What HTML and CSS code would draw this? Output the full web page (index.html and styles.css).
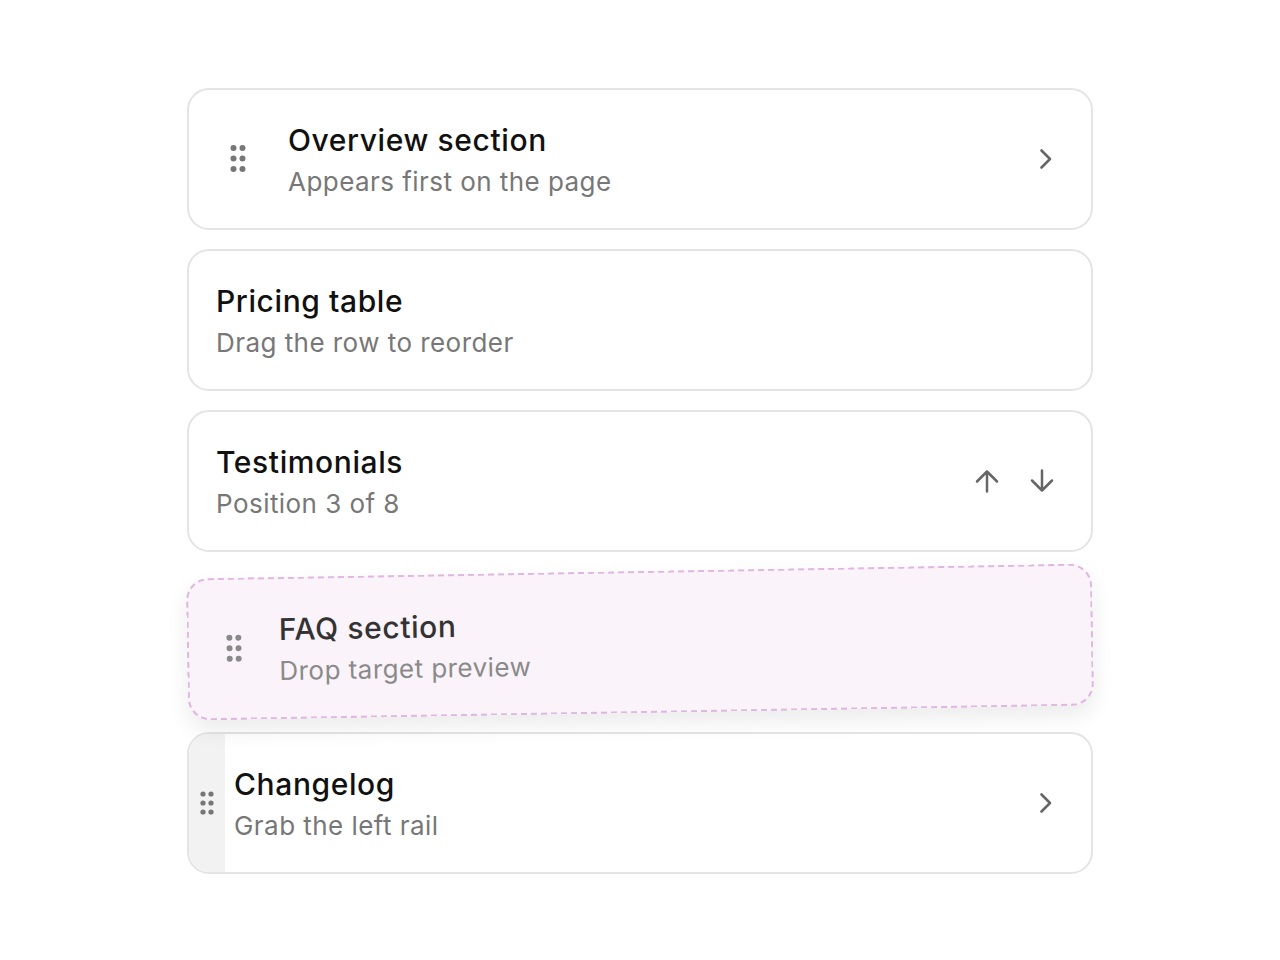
FILE: index.html
```html
<!DOCTYPE html>
<html lang="en">
<head>
<meta charset="utf-8">
<title>Reorder sections</title>
<link rel="stylesheet" href="styles.css">
</head>
<body>
<main class="list">
  <div class="card card-handle">
    <svg class="grip" width="16" height="28" viewBox="0 0 16 28"><circle cx="3.5" cy="3" r="3"/><circle cx="12.5" cy="3" r="3"/><circle cx="3.5" cy="13.5" r="3"/><circle cx="12.5" cy="13.5" r="3"/><circle cx="3.5" cy="24" r="3"/><circle cx="12.5" cy="24" r="3"/></svg>
    <div class="text">
      <div class="title">Overview section</div>
      <div class="sub">Appears first on the page</div>
    </div>
    <svg class="chev" width="14" height="22" viewBox="0 0 14 22"><path d="M2.5 2.5 L11 11 L2.5 19.5"/></svg>
  </div>

  <div class="card">
    <div class="text">
      <div class="title">Pricing table</div>
      <div class="sub">Drag the row to reorder</div>
    </div>
  </div>

  <div class="card">
    <div class="text">
      <div class="title">Testimonials</div>
      <div class="sub">Position 3 of 8</div>
    </div>
    <div class="arrows">
      <svg class="arrow" width="24" height="24" viewBox="0 0 24 24"><path d="M12 22.5V2.5 M2 12.5 L12 2.5 L22 12.5"/></svg>
      <svg class="arrow" width="24" height="24" viewBox="0 0 24 24"><path d="M12 1.5V21.5 M2 11.5 L12 21.5 L22 11.5"/></svg>
    </div>
  </div>

  <div class="card card-drag">
    <svg class="grip" width="16" height="28" viewBox="0 0 16 28"><circle cx="3.5" cy="3" r="3"/><circle cx="12.5" cy="3" r="3"/><circle cx="3.5" cy="13.5" r="3"/><circle cx="12.5" cy="13.5" r="3"/><circle cx="3.5" cy="24" r="3"/><circle cx="12.5" cy="24" r="3"/></svg>
    <div class="text">
      <div class="title">FAQ section</div>
      <div class="sub">Drop target preview</div>
    </div>
  </div>

  <div class="card card-rail">
    <div class="rail">
      <svg class="grip" width="14" height="24" viewBox="0 0 14 24"><circle cx="3" cy="3" r="2.6"/><circle cx="11" cy="3" r="2.6"/><circle cx="3" cy="12" r="2.6"/><circle cx="11" cy="12" r="2.6"/><circle cx="3" cy="21" r="2.6"/><circle cx="11" cy="21" r="2.6"/></svg>
    </div>
    <div class="text">
      <div class="title">Changelog</div>
      <div class="sub">Grab the left rail</div>
    </div>
    <svg class="chev" width="14" height="22" viewBox="0 0 14 22"><path d="M2.5 2.5 L11 11 L2.5 19.5"/></svg>
  </div>
</main>
</body>
</html>
```

FILE: styles.css
```css
* { box-sizing: border-box; }

body {
  margin: 0;
  background: #ffffff;
  font-family: Inter, "Noto Sans", "Liberation Sans", sans-serif;
}

.list {
  width: 906px;
  margin: 88px auto 0;
  display: flex;
  flex-direction: column;
  gap: 19px;
}

.card {
  height: 142px;
  border: 2px solid #e4e4e4;
  border-radius: 22px;
  background: #ffffff;
  display: flex;
  align-items: center;
  padding: 0 38px 0 27px;
  overflow: hidden;
}

.text {
  flex: 1;
  display: flex;
  flex-direction: column;
  gap: 4px;
  padding-top: 3px;
}

.title {
  font-size: 30px;
  font-weight: 500;
  line-height: 38px;
  letter-spacing: 0.6px;
  color: #111111;
}

.sub {
  font-size: 26px;
  font-weight: 400;
  line-height: 38px;
  letter-spacing: 0.45px;
  color: #777777;
}

.grip { fill: #777777; flex: none; }

.chev {
  flex: none;
  fill: none;
  stroke: #666666;
  stroke-width: 2.6;
  stroke-linecap: round;
  stroke-linejoin: round;
}

.card-handle { padding-left: 41px; }
.card-handle .grip { margin-right: 42px; }

.arrows {
  display: flex;
  gap: 31px;
  margin-right: -1px;
}

.arrow {
  fill: none;
  stroke: #666666;
  stroke-width: 2.5;
  stroke-linecap: round;
  stroke-linejoin: round;
}

.card-drag {
  background: #faf3fa;
  border: 2px dashed #dfb7df;
  transform: rotate(-0.95deg);
  box-shadow: 0 10px 22px rgba(0, 0, 0, 0.08);
  padding-left: 37px;
  overflow: visible;
}
.card-drag .grip { margin-right: 37px; fill: #8a8a8a; }
.card-drag .title { color: #333333; }
.card-drag .sub { color: #8a8a8a; }

.card-rail { padding-left: 0; }
.rail {
  align-self: stretch;
  width: 36px;
  background: #f2f2f2;
  display: flex;
  align-items: center;
  justify-content: center;
  margin-right: 9px;
  flex: none;
}
```
